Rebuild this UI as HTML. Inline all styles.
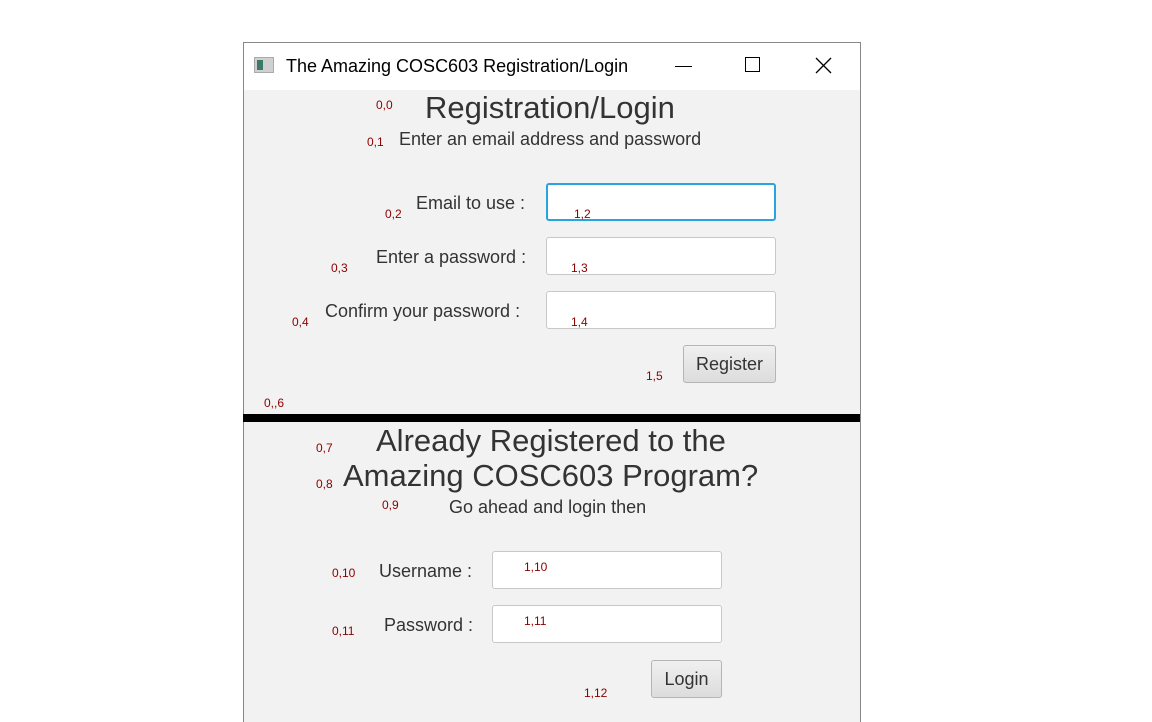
<!DOCTYPE html>
<html><head><style>
body{margin:0;width:1152px;height:721px;background:#fff;position:relative;overflow:hidden;font-family:"Liberation Sans",sans-serif;}
.a{position:absolute;white-space:nowrap;}
.win{position:absolute;left:243px;top:42px;width:616px;height:679px;border:1px solid #888;border-bottom:none;background:#f2f2f2;}
.tb{position:absolute;left:0;top:0;width:616px;height:47px;background:#fff;}
.r{color:#8b0000;font-size:12px;}
.l{color:#333;font-size:18px;}
.h{color:#333;font-size:31px;}
.in{position:absolute;background:#fff;border:1px solid #c8c8c8;border-radius:3px;box-sizing:border-box;}
.btn{position:absolute;border:1px solid #b5b5b5;border-radius:3px;background:linear-gradient(#f0f0f0,#dcdcdc);box-sizing:border-box;color:#333;font-size:18px;text-align:center;}
</style></head><body>
<div class="win"><div class="tb"></div></div>
<div class="a" style="left:254px;top:57px;width:20px;height:16px;background:#d0d0d0;border:1px solid #aaa;box-sizing:border-box"><div style="position:absolute;left:2px;top:2px;width:6px;height:10px;background:#3a7a6a"></div></div>
<div class="a" style="left:286px;top:56px;font-size:18px;color:#000">The Amazing COSC603 Registration/Login</div>
<div class="a" style="left:675px;top:66px;width:17px;height:1px;background:#000"></div>
<div class="a" style="left:745px;top:57px;width:15px;height:15px;border:1px solid #000;box-sizing:border-box"></div>
<svg class="a" style="left:815px;top:57px" width="17" height="17"><path d="M1 1L16 16M16 1L1 16" stroke="#000" stroke-width="1.3"/></svg>

<div class="a r" style="left:376px;top:98px">0,0</div>
<div class="a h" style="left:425px;top:90px">Registration/Login</div>
<div class="a r" style="left:367px;top:135px">0,1</div>
<div class="a l" style="left:399px;top:129px">Enter an email address and password</div>

<div class="a l" style="left:416px;top:193px">Email to use :</div>
<div class="a r" style="left:385px;top:207px">0,2</div>
<div class="in" style="left:546px;top:183px;width:230px;height:38px;border:2px solid #2aa4dc"></div>
<div class="a r" style="left:574px;top:207px">1,2</div>

<div class="a l" style="left:376px;top:247px">Enter a password :</div>
<div class="a r" style="left:331px;top:261px">0,3</div>
<div class="in" style="left:546px;top:237px;width:230px;height:38px"></div>
<div class="a r" style="left:571px;top:261px">1,3</div>

<div class="a l" style="left:325px;top:301px">Confirm your password :</div>
<div class="a r" style="left:292px;top:315px">0,4</div>
<div class="in" style="left:546px;top:291px;width:230px;height:38px"></div>
<div class="a r" style="left:571px;top:315px">1,4</div>

<div class="btn" style="left:683px;top:345px;width:93px;height:38px;line-height:36px">Register</div>
<div class="a r" style="left:646px;top:369px">1,5</div>
<div class="a r" style="left:264px;top:396px">0,,6</div>

<div class="a" style="left:243px;top:414px;width:617px;height:8px;background:#000"></div>

<div class="a r" style="left:316px;top:441px">0,7</div>
<div class="a h" style="left:376px;top:423px">Already Registered to the</div>
<div class="a r" style="left:316px;top:477px">0,8</div>
<div class="a h" style="left:343px;top:458px">Amazing COSC603 Program?</div>
<div class="a r" style="left:382px;top:498px">0,9</div>
<div class="a l" style="left:449px;top:497px">Go ahead and login then</div>

<div class="a r" style="left:332px;top:566px">0,10</div>
<div class="a l" style="left:379px;top:561px">Username :</div>
<div class="in" style="left:492px;top:551px;width:230px;height:38px"></div>
<div class="a r" style="left:524px;top:560px">1,10</div>

<div class="a r" style="left:332px;top:624px">0,11</div>
<div class="a l" style="left:384px;top:615px">Password :</div>
<div class="in" style="left:492px;top:605px;width:230px;height:38px"></div>
<div class="a r" style="left:524px;top:614px">1,11</div>

<div class="btn" style="left:651px;top:660px;width:71px;height:38px;line-height:36px">Login</div>
<div class="a r" style="left:584px;top:686px">1,12</div>
</body></html>
